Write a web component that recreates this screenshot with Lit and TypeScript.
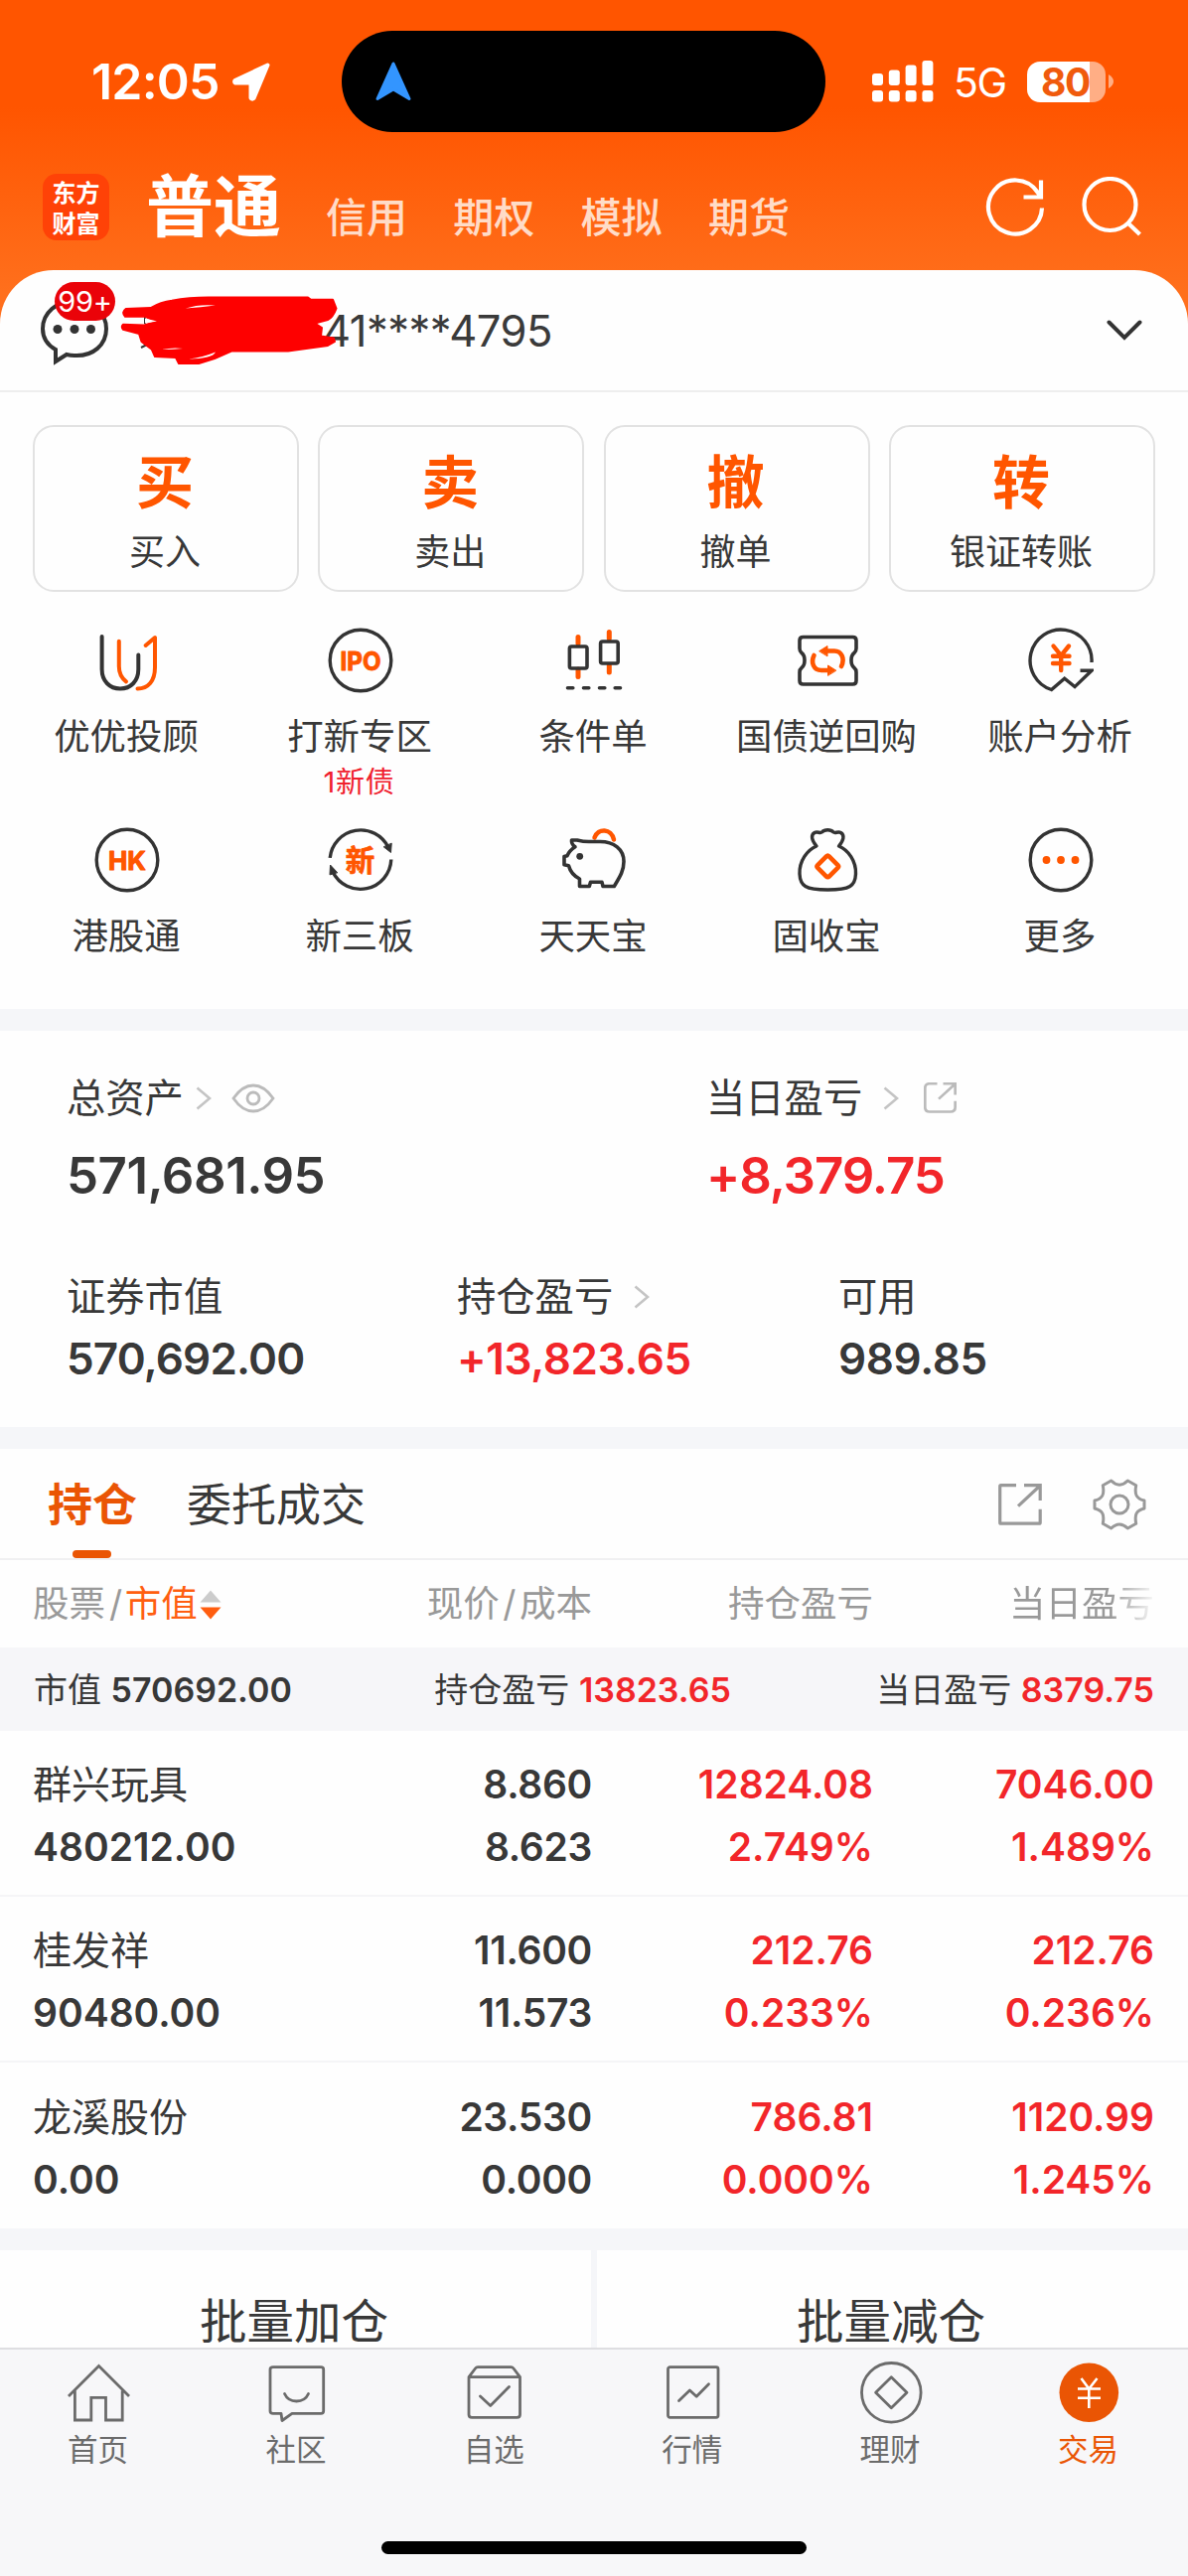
import { LitElement, html, css, svg, TemplateResult } from "lit";
import { customElement } from "lit/decorators.js";
import { classMap } from "lit/directives/class-map.js";

const DARK = "#333";
const ORANGE = "#ff5600";
const GREY = "#6b6b6b";

const icon = (body: TemplateResult, size = 66) =>
  html`<svg class="ico" width=${size} height=${size} viewBox="0 0 ${size} ${size}" fill="none" stroke-linecap="round" stroke-linejoin="round">${body}</svg>`;

const chevron = html`<svg class="chev" width="16" height="24" viewBox="0 0 16 24" fill="none" stroke="#c4c4c4" stroke-width="2.6"><path d="M1.5 1.5L14 12L1.5 22.5"/></svg>`;

interface Shortcut { label: string; note?: string; art: TemplateResult }

const shortcuts: Shortcut[] = [
  { label: "优优投顾", art: svg`
    <g stroke-width="4"><path stroke=${DARK} d="M7.6 9V42C7.6 54 15.5 61.5 26 61.5S44.3 54 44.3 42V27.5"/>
    <path stroke=${ORANGE} d="M24.8 13.7V39C24.8 46 27 50.5 32 54.3"/>
    <path stroke=${ORANGE} d="M51.6 18L61 10V40C61 54 54 61.5 43.5 61.5"/></g>` },
  { label: "打新专区", note: "1新债", art: svg`
    <circle cx="33" cy="33" r="30.8" stroke=${DARK} stroke-width="3.4"/>
    <text class="mark" x="33" y="42.5" font-size="26" textLength="41" lengthAdjust="spacingAndGlyphs" fill=${ORANGE} stroke=${ORANGE} stroke-width="1">IPO</text>` },
  { label: "条件单", art: svg`
    <path stroke=${ORANGE} stroke-width="5" d="M17 9.5V16M17 42V49.5M48.3 4.5V11M48.3 38V45"/>
    <g stroke=${DARK} stroke-width="3.6"><rect x="8.4" y="19" width="17.6" height="22" rx="2"/><rect x="39.6" y="14" width="17.6" height="22" rx="2"/>
    <path d="M6.5 60.7H11.8M22.5 60.7H27.8M38.5 60.7H43.8M54.2 60.7H59.5"/></g>` },
  { label: "国债逆回购", art: svg`
    <path stroke=${DARK} stroke-width="3.6" d="M8.5 9.5H58.5Q62 9.5 62 13V21Q62 24 60 25.5C56 28.5 56 37.5 60 40.5Q62 42 62 45V53.5Q62 57 58.5 57H8.5Q5 57 5 53.5V45Q5 42 7 40.5C11 37.5 11 28.5 7 25.5Q5 24 5 21V13Q5 9.5 8.5 9.5Z"/>
    <g stroke=${ORANGE} stroke-width="4.6"><path d="M32 23.5H40C47 23.5 51 31 47 39M34 43H27C19 43 16 35 19.5 28"/></g>
    <path fill=${ORANGE} stroke=${ORANGE} d="M25 23.5L33 18.5V28.5ZM41.5 43L33.5 38V48Z"/>` },
  { label: "账户分析", art: svg`
    <path stroke=${DARK} stroke-width="3.4" stroke-linecap="butt" stroke-linejoin="miter" d="M64 35A31 31 0 1 0 23.5 62.5L36.7 51.2L47 59.6L64 43.2H52.5"/>
    <path stroke=${ORANGE} stroke-width="4.4" d="M25.5 18.5L33.2 28.2L41 18.5M33.2 28.2V43M25 28.7H41.5M25 36H41.5"/>` },
  { label: "港股通", art: svg`
    <circle cx="33" cy="33" r="30.8" stroke=${DARK} stroke-width="3.4"/>
    <text class="mark" x="33" y="42.5" font-size="26" textLength="38" lengthAdjust="spacingAndGlyphs" fill=${ORANGE} stroke=${ORANGE} stroke-width="1">HK</text>` },
  { label: "新三板", art: svg`
    <path stroke=${DARK} stroke-width="3.4" stroke-linecap="butt" d="M2.2 30.8A31 31 0 0 1 61 20.5M63.8 32.5A31 31 0 0 1 5 45"/>
    <path fill=${DARK} stroke=${DARK} d="M56.5 20L63.5 25.5L64.2 16.5ZM9.5 45.5L2.5 38L2 47.5Z"/>
    <text class="mark cjk" x="32.5" y="43.5" font-size="29.5" fill=${ORANGE} stroke=${ORANGE} stroke-width="0.7">新</text>` },
  { label: "天天宝", art: svg`
    <path stroke=${ORANGE} stroke-width="4.5" d="M33.5 10.5C37 0.5 50.5 1 53 12.5"/>
    <path stroke=${DARK} stroke-width="3.6" d="M10.5 13H16C22 14.5 25 14.8 30 14.5H39C53 14.5 63 22 63 34.5C63 44 59 50 53.3 59.5H42L41 55.3H29.5L28.3 59.5H18.5V52C12.5 49 9 44.5 7.5 38.8L3 37.8V29.5L6 28.7C8 24 10.5 22 14 19.7Q10 17 10.5 13Z"/>
    <circle cx="18.7" cy="29.3" r="3.4" fill=${DARK}/>` },
  { label: "固收宝", art: svg`
    <path stroke=${DARK} stroke-width="3.4" d="M22 19C17 13 16 8 20 5.5C23 4 25.5 6.5 27.5 5C30 2 36.5 2 39 5C41 6.5 43.5 4 46.5 5.5C50.5 8 49.5 13 44.5 19C54 23 62 34 61.5 47C61 59 56 63 33.3 63S5.5 59 5 47C4.5 34 12.5 23 22 19Z"/>
    <path stroke=${ORANGE} stroke-width="4.6" d="M31.9 29.4Q33.3 28 34.7 29.4L43.4 38.1Q44.8 39.5 43.4 40.9L34.7 49.6Q33.3 51 31.9 49.6L23.2 40.9Q21.8 39.5 23.2 38.1Z"/>` },
  { label: "更多", art: svg`
    <circle cx="33" cy="33" r="30.8" stroke=${DARK} stroke-width="3.4"/>
    <g fill=${ORANGE}><circle cx="18.5" cy="33" r="3.9"/><circle cx="33" cy="33" r="3.9"/><circle cx="47.5" cy="33" r="3.9"/></g>` },
];

const actions = [["买", "买入"], ["卖", "卖出"], ["撤", "撤单"], ["转", "银证转账"]];

const holdings = [
  { name: "群兴玩具", value: "480212.00", price: "8.860", cost: "8.623", pl: "12824.08", plPct: "2.749%", day: "7046.00", dayPct: "1.489%" },
  { name: "桂发祥", value: "90480.00", price: "11.600", cost: "11.573", pl: "212.76", plPct: "0.233%", day: "212.76", dayPct: "0.236%" },
  { name: "龙溪股份", value: "0.00", price: "23.530", cost: "0.000", pl: "786.81", plPct: "0.000%", day: "1120.99", dayPct: "1.245%" },
];

const tabs: { label: string; active?: boolean; art: TemplateResult }[] = [
  { label: "首页", art: svg`<path stroke-linecap="butt" stroke-linejoin="miter" d="M3 37L33.5 6.5L64 37M9.4 31.5V61H25.8V38.3H40.5V61H57.2V31.5"/>` },
  { label: "社区", art: svg`<path d="M10 7.7H58Q60.7 7.7 60.7 10V52Q60.7 54.3 58 54.3H29L19 61.5L18 54.3H10Q7 54.3 7 52V10Q7 7.7 10 7.7ZM21.5 34.5C26 44.5 41 44.5 45.5 34.5"/>` },
  { label: "自选", art: svg`<path d="M7 17.7H58.5V55.5Q58.5 58.3 55.5 58.3H10Q7 58.3 7 55.5V17.7L13.5 9Q14.5 7.7 16 7.7H49.5Q51 7.7 52 9L58.5 17.7M18.5 37L28.7 46.5L47.5 27.5"/>` },
  { label: "行情", art: svg`<rect x="8.5" y="7.7" width="50.5" height="50.6" rx="2"/><path d="M19.5 41.5L30.4 31L37.2 37.3L49.5 24.8"/>` },
  { label: "理财", art: svg`<circle cx="33.3" cy="33.3" r="29.8"/><path d="M33.3 17.8L49 33.3L33.3 48.8L17.6 33.3Z"/>` },
  { label: "交易", active: true, art: svg`<circle cx="33.3" cy="33.3" r="29.8" fill="#ea5504" stroke="none"/><path stroke="#fff" stroke-width="2.6" stroke-linecap="butt" d="M25.5 19L33.3 29.5L41.5 19M33.3 29.5V49M22 29.5H45M22 38.7H45"/>` },
];

@customElement("app-root")
export class AppRoot extends LitElement {
  static styles = css`
    :host { display: block; width: 1196px; height: 2594px; overflow: hidden; background: #fefefe; color: #383838;
      font-family: "Inter", "Noto Sans CJK SC", sans-serif; line-height: 1; }
    * { box-sizing: border-box; }
    svg { display: block; flex: none; }
    .page { height: 2594px; display: flex; flex-direction: column; }
    .page > * { flex: none; }
    .row { display: flex; align-items: center; }
    .mark { font-family: "Inter", sans-serif; font-weight: 700; text-anchor: middle; }
    .mark.cjk { font-family: "Noto Sans CJK SC", sans-serif; font-weight: 700; }

    .top { height: 326px; margin-bottom: -54px; background: linear-gradient(#ff5500, #ff5500 33%, #ff6f1c 90%); color: #fff; }
    .status { height: 164px; padding-left: 92px; }
    .time { width: 142px; font-size: 50px; font-weight: 600; letter-spacing: -0.8px; white-space: nowrap; }
    .island { width: 487px; height: 102px; margin-left: 72px; padding-left: 34px; border-radius: 51px; background: #000; }
    .signal { margin-left: 47px; }
    .net { width: 74px; margin-left: 20px; font-size: 41px; letter-spacing: -1.5px; padding-top: 2px; }
    .battery { width: 79px; height: 41px; border-radius: 13px; background: linear-gradient(90deg, #fff 63px, #ffae85 63px); color: #f05a0c;
      font-size: 39px; font-weight: 700; letter-spacing: -1.5px; padding-left: 14px; }
    .nub { margin-left: 3px; }
    .nav { height: 88px; padding-left: 43px; }
    .logo { width: 67px; height: 67px; border-radius: 14px; background: #ff4207; display: grid; place-content: center; gap: 4px;
      font-family: "Noto Sans CJK SC", sans-serif; font-weight: 700; font-size: 24px; line-height: 27px; }
    .main { margin-left: 37px; font-size: 68px; font-weight: 700; }
    .sub { display: flex; gap: 46.3px; margin-left: 45px; padding-top: 22px; font-size: 41px; font-weight: 500; color: #ffdcc8; width: 664px; }

    .sheet { border-radius: 54px 54px 0 0; background: #fefefe; }
    .account { height: 123px; border-bottom: 2px solid #eee; position: relative; padding: 0 46px 0 41px; justify-content: space-between; }
    .badge { position: absolute; left: 55px; top: 12px; width: 61px; height: 39px; border-radius: 20px; background: #ea0309; color: #fff;
      font-size: 29px; display: grid; place-items: center; letter-spacing: -0.3px; }
    .number { margin-left: 216px; padding-top: 3px; flex: 1; font-size: 43.5px; letter-spacing: -0.5px; color: #3a3a3a; }
    .scribble { position: absolute; left: 120px; top: 24px; }

    .actions { display: grid; grid-template-columns: repeat(4, 268px); gap: 19.3px; padding: 33px 33px 0; }
    .action { height: 168px; border: 2px solid #e2e2e2; border-radius: 21px; display: flex; flex-direction: column; align-items: center; padding: 27px 2px 0 0; }
    .action b { font-size: 58px; line-height: 58px; color: #ff5600; }
    .action span { margin-top: 23px; font-size: 36px; line-height: 36px; }
    .shortcuts { display: grid; grid-template-columns: repeat(5, 235px); grid-auto-rows: 200.5px; justify-content: center; padding-top: 36px; height: 420px; }
    .shortcut { display: flex; flex-direction: column; align-items: center; }
    .shortcut span { margin: 26px 2px 0 0; font-size: 36.4px; line-height: 36px; }
    .shortcut em { margin: 13px 3px 0 0; font-style: normal; font-size: 29px; line-height: 29px; color: #f0202e; letter-spacing: 0.8px; }

    .band { height: 22px; background: #f5f6f9; }
    .assets { height: 399px; padding: 44px 67px 0; }
    .pair { display: grid; grid-template-columns: 644px 1fr; height: 190px; }
    .trio { display: grid; grid-template-columns: 393px 384px 1fr; padding-top: 10px; }
    .cap { height: 48px; font-size: 39.3px; white-space: nowrap; }
    .chev { margin-left: 12px; }
    .far .chev { margin-left: 21px; }
    .extra { margin-left: 20px; }
    .far .extra { margin-left: 25px; }
    .big { margin-top: 28px; font-size: 51px; line-height: 51px; font-weight: 600; letter-spacing: -0.5px; }
    .big.up { letter-spacing: -1.1px; }
    .mid { margin-top: 16px; font-size: 44px; line-height: 44px; font-weight: 600; letter-spacing: -0.8px; }
    .mid.up { letter-spacing: -0.35px; }
    .mid.tight { letter-spacing: -0.35px; }
    .up { color: #f2262a; }

    .tabs { height: 112px; padding: 2px 42px 0 48px; border-bottom: 2px solid #f0f0f2; position: relative; font-size: 45px; }
    .tabs .on { color: #ea5504; font-weight: 700; }
    .tabs .off { margin-left: 50px; flex: 1; }
    .bar { position: absolute; left: 73px; bottom: 0; width: 39px; height: 8px; border-radius: 4px; background: #ea5504; }
    .gear { margin-left: 51px; }
    .head { height: 88px; }
    .grid { display: grid; grid-template-columns: 263px 300px 283px 283px; padding: 0 33px; align-items: center; }
    .head { font-size: 36.5px; color: #999; padding-top: 1px; }
    .grid > :nth-child(n + 2) { text-align: right; }
    .sort { display: flex; align-items: center; color: #ff5e10; white-space: nowrap; }
    .sort i { font-style: normal; color: #999; }
    .slash { margin: 0 3.5px; }
    .sort .slash { margin: 0 2.5px 0 4px; }
    .sort svg { margin-left: 2px; }
    .fade { background: linear-gradient(90deg, #999 70%, #fefefe 102%); -webkit-background-clip: text; background-clip: text; color: transparent;
      justify-self: end; line-height: 1.4; }
    .sum { height: 84px; padding: 1px 34px 0 34px; justify-content: space-between; background: #f6f6f9; font-size: 34px; white-space: pre; }
    .sum span:nth-child(2) { margin-left: -3px; }
    .sum b, .cell b { font-weight: 600; }
    .hold { height: 167px; border-bottom: 2px solid #f5f5f7; }
    .hold:last-of-type { border-bottom: 0; }
    .cell { display: flex; flex-direction: column; gap: 24px; font-size: 39px; line-height: 39px; padding-top: 4px; }
    .cell:nth-child(2) b { letter-spacing: -0.3px; }
    .batch { display: grid; grid-template-columns: 1fr 1fr; gap: 6px; height: 98px; background: #f5f6f9; font-size: 47.5px; }
    .batch div { background: #fefefe; text-align: center; padding: 48px 3px 0 0; overflow: hidden; }
    .dock { height: 230px; background: #f7f7f9; border-top: 2px solid #dedee1; display: flex; flex-direction: column; align-items: center; justify-content: space-between; }
    .items { display: grid; grid-template-columns: repeat(6, 199.4px); padding: 10px 1px 0 0; }
    .item { display: flex; flex-direction: column; align-items: center; gap: 10px; font-size: 30.5px; line-height: 30px; color: #6b6b6b; }
    .item span { padding-right: 1px; }
    .item.active { color: #ea5504; }
    .home { width: 428px; height: 13px; border-radius: 7px; background: #000; margin-bottom: 22px; }
  `;

  private share(size: number, stroke: string, width: number, radius: number) {
    const r = radius;
    return html`<svg width=${size} height=${size * (r > 1 ? 0.94 : 0.96)} viewBox="0 0 44 42" fill="none" stroke=${stroke} stroke-width=${width} preserveAspectRatio="none">
      <path d="M18 1.7H${1.7 + r}Q1.7 1.7 1.7 ${1.7 + r}V${40 - r}Q1.7 40 ${1.7 + r} 40H${42 - r}Q42.2 40 42.2 ${40 - r}V25.5M26 1.7H42.2V17M41 3L20 22.5"/></svg>`;
  }

  private statusBar() {
    return html`<div class="status row">
      <div class="time">12:05</div>
      <svg width="38" height="39" viewBox="0 0 38 39"><path fill="#fff" stroke="#fff" stroke-width="4" stroke-linejoin="round" d="M35.5 2.5L2.5 18Q1.5 20 3 20.5H18.5V35.5Q19.5 37.5 21.5 36Z"/></svg>
      <div class="island row"><svg width="36" height="40" viewBox="0 0 36 40"><path fill="#3395ff" stroke="#3395ff" stroke-width="3" stroke-linejoin="round" d="M18 2L2 37.5L18 28L34 37.5Z"/></svg></div>
      <svg class="signal" width="62" height="42" viewBox="0 0 62 42" fill="#fff">
        <rect x="0" y="13" width="11" height="12" rx="3"/><rect x="16.8" y="9.5" width="11" height="15.5" rx="3"/><rect x="33.6" y="4.5" width="11" height="20.5" rx="3"/><rect x="50.4" y="0" width="11" height="25" rx="3"/>
        <rect x="0" y="30" width="11" height="11.5" rx="3"/><rect x="16.8" y="30" width="11" height="11.5" rx="3"/><rect x="33.6" y="30" width="11" height="11.5" rx="3"/><rect x="50.4" y="30" width="11" height="11.5" rx="3"/></svg>
      <div class="net">5G</div>
      <div class="battery row">80</div>
      <svg class="nub" width="6" height="14" viewBox="0 0 6 14"><path fill="#ffae85" d="M0 0Q5 3 5 7T0 14Z"/></svg>
    </div>`;
  }

  private nav() {
    return html`<div class="nav row">
      <div class="logo"><span>东方</span><span>财富</span></div>
      <div class="main">普通</div>
      <div class="sub"><span>信用</span><span>期权</span><span>模拟</span><span>期货</span></div>
      <svg width="158" height="60" viewBox="0 0 158 60" fill="none" stroke="#fff" stroke-width="4.2">
        <path d="M57 31.5A27 27 0 1 1 52.5 15.5L56 20M56 3.5V20.5H38.5"/>
        <circle cx="125.5" cy="28" r="26"/><path d="M144 47L155.5 58"/></svg>
    </div>`;
  }

  private account() {
    return html`<div class="account row">
      <svg width="68" height="70" viewBox="0 0 68 70" fill="none" stroke="#333" stroke-width="4">
        <path d="M15 54C6 49 2 42 2 33C2 17 16 5 34 5S66 17 66 33S53 61 34 60Q30 60 26 59L15 66Z"/>
        <g fill="#333" stroke="none"><circle cx="17" cy="33.5" r="4.5"/><circle cx="34" cy="33.5" r="4.5"/><circle cx="50.5" cy="33.5" r="4.5"/></g></svg>
      <div class="badge">99+</div>
      <div class="number">41****4795</div>
      <svg class="scribble" width="224" height="74" viewBox="0 0 224 74">
        <path d="M22 54L32 49M26 23V30" stroke="#333" stroke-width="2"/>
        <path fill="#fe0000" stroke="#fe0000" stroke-width="2" stroke-linejoin="round" d="M6.7 15L31.7 14Q42 8 53 6.7Q70 3.5 90 3.5H190L193 5.7H215L218.5 14.7Q215 24 210 26L197 29.5L204 34L203 42.5L216 44.5L217 48L210 52L170 57.5H113L96 65L80 70H60L57 64L36 63L32.7 55.7L22.5 48L20 40L4 35.7Q1.5 33 4 30.7L25 31.5L37 28L26 22.7H6Q2 18.5 6.7 15Z"/>
        <path fill="#fff" d="M67 14.5Q80 10 97 11.5Q82 13.5 67 14.5ZM70 65.5Q84 64 97 58.5Q94 65 70 65.5ZM43 56Q54 53.5 64 55Q54 56 43 56ZM26 24.500L38 27.500L26 29.500Z"/></svg>
      <svg width="36" height="22" viewBox="0 0 36 22" fill="none" stroke="#333" stroke-width="4" stroke-linecap="round"><path d="M2.5 2.5L18 18L33.5 2.5"/></svg>
    </div>`;
  }

  private assets() {
    return html`<section class="assets">
      <div class="pair">
        <div><div class="cap row">总资产${chevron}<svg class="extra" width="44" height="30" viewBox="0 0 44 30" fill="none" stroke="#bbb" stroke-width="2.8"><path d="M2 15Q11 2 22 2T42 15Q33 28 22 28T2 15Z"/><circle cx="22" cy="15" r="6"/></svg></div>
          <div class="big">571,681.95</div></div>
        <div class="far"><div class="cap row">当日盈亏${chevron}<span class="extra">${this.share(33, "#bbb", 3.6, 6)}</span></div>
          <div class="big up">+8,379.75</div></div>
      </div>
      <div class="trio">
        <div><div class="cap row">证券市值</div><div class="mid">570,692.00</div></div>
        <div class="far"><div class="cap row">持仓盈亏${chevron}</div><div class="mid up">+13,823.65</div></div>
        <div><div class="cap row">可用</div><div class="mid tight">989.85</div></div>
      </div>
    </section>`;
  }

  private positions() {
    return html`<div class="tabs row">
        <span class="on">持仓</span><span class="off">委托成交</span>
        ${this.share(44, "#999", 3.2, 1)}
        <svg class="gear" width="54" height="54" viewBox="-27 -27 54 54" fill="none" stroke="#999" stroke-width="3" stroke-linejoin="round">
          <path d="M-25 -4V4C-17 6 -15 10 -16.7 19.3L-8.3 24C-3 18.5 3 18.5 8.3 24L16.7 19.3C15 10 17 6 25 4V-4C17 -6 15 -10 16.7 -19.3L8.3 -24C3 -18.5 -3 -18.5 -8.3 -24L-16.7 -19.3C-15 -10 -17 -6 -25 -4Z"/><circle r="9"/></svg>
        <div class="bar"></div>
      </div>
      <div class="head grid">
        <div class="sort"><i>股票<span class="slash">/</span></i>市值<svg width="22" height="30" viewBox="0 0 22 30"><path fill="#ccc" d="M11 0.5L21.5 12.5H0.5Z"/><path fill="#ff5e10" d="M11 29.5L21.5 17.5H0.5Z"/></svg></div>
        <div>现价<span class="slash">/</span>成本</div><div>持仓盈亏</div><div class="fade">当日盈亏</div>
      </div>
      <div class="sum row"><span>市值 <b>570692.00</b></span><span>持仓盈亏 <b class="up">13823.65</b></span><span>当日盈亏 <b class="up">8379.75</b></span></div>
      <div>${holdings.map((h) => html`<div class="hold grid">
        <div class="cell"><span>${h.name}</span><b>${h.value}</b></div>
        <div class="cell"><b>${h.price}</b><b>${h.cost}</b></div>
        <div class="cell up"><b>${h.pl}</b><b>${h.plPct}</b></div>
        <div class="cell up"><b>${h.day}</b><b>${h.dayPct}</b></div></div>`)}</div>`;
  }

  render() {
    return html`<main class="page">
      <header class="top">${this.statusBar()}${this.nav()}</header>
      <div class="sheet">
        ${this.account()}
        <div class="actions">${actions.map(([mark, label]) => html`<div class="action"><b>${mark}</b><span>${label}</span></div>`)}</div>
        <div class="shortcuts">${shortcuts.map((s) => html`<div class="shortcut">${icon(s.art)}<span>${s.label}</span>${s.note ? html`<em>${s.note}</em>` : ""}</div>`)}</div>
      </div>
      <div class="band"></div>
      ${this.assets()}
      <div class="band"></div>
      ${this.positions()}
      <div class="band"></div>
      <div class="batch"><div>批量加仓</div><div>批量减仓</div></div>
      <nav class="dock">
        <div class="items">${tabs.map((t) => html`<div class=${classMap({ item: true, active: !!t.active })}>
          <svg width="66" height="66" viewBox="0 0 66 66" fill="none" stroke=${GREY} stroke-width="2.8" stroke-linejoin="round" stroke-linecap="round">${t.art}</svg><span>${t.label}</span></div>`)}</div>
        <div class="home"></div>
      </nav>
    </main>`;
  }
}
